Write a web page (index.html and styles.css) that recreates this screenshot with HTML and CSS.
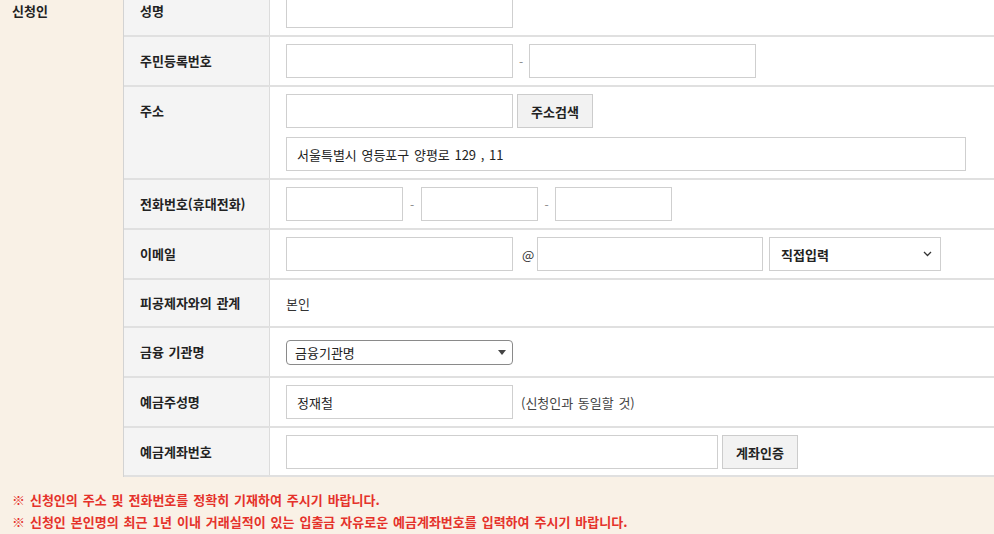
FILE: index.html
```html
<!DOCTYPE html>
<html lang="ko">
<head>
<meta charset="utf-8">
<title>신청인</title>
<link rel="stylesheet" href="styles.css">
</head>
<body>
<div class="page">
  <div class="form">
    <div class="side">신청인</div>
    <div class="rows">
      <div class="row">
        <div class="label">성명</div>
        <div class="field"><div class="line"><input class="inp w227" type="text"></div></div>
      </div>
      <div class="row">
        <div class="label">주민등록번호</div>
        <div class="field"><div class="line"><input class="inp w227" type="text"><span class="sep s16">-</span><input class="inp w227" type="text"></div></div>
      </div>
      <div class="row">
        <div class="label">주소</div>
        <div class="field">
          <div class="line"><input class="inp w227" type="text"><button class="btn b76 ml4" type="button">주소검색</button></div>
          <div class="line"><input class="inp w680" type="text" value="서울특별시 영등포구 양평로 129 , 11"></div>
        </div>
      </div>
      <div class="row">
        <div class="label">전화번호(휴대전화)</div>
        <div class="field"><div class="line"><input class="inp w117" type="text"><span class="sep s18">-</span><input class="inp w117" type="text"><span class="sep s17">-</span><input class="inp w117" type="text"></div></div>
      </div>
      <div class="row">
        <div class="label">이메일</div>
        <div class="field"><div class="line"><input class="inp w227" type="text"><span class="sep at">@</span><input class="inp w226" type="text"><div class="sel ml6"><span>직접입력</span><svg class="chev" width="9" height="6" viewBox="0 0 9 6"><path d="M1 1 L4.5 4.5 L8 1" fill="none" stroke="#333" stroke-width="1.3"/></svg></div></div></div>
      </div>
      <div class="row short">
        <div class="label">피공제자와의 관계</div>
        <div class="field"><div class="line text">본인</div></div>
      </div>
      <div class="row">
        <div class="label">금융 기관명</div>
        <div class="field"><div class="line"><div class="bank"><span>금융기관명</span><svg width="8" height="5" viewBox="0 0 8 5"><path d="M0 0 H8 L4 5 Z" fill="#444"/></svg></div></div></div>
      </div>
      <div class="row">
        <div class="label">예금주성명</div>
        <div class="field"><div class="line"><input class="inp w227" type="text" value="정재철"><span class="hint">(신청인과 동일할 것)</span></div></div>
      </div>
      <div class="row last">
        <div class="label">예금계좌번호</div>
        <div class="field"><div class="line"><input class="inp w432" type="text"><button class="btn b76 ml4" type="button">계좌인증</button></div></div>
      </div>
    </div>
  </div>
  <div class="notice">
    <p>※ 신청인의 주소 및 전화번호를 정확히 기재하여 주시기 바랍니다.</p>
    <p>※ 신청인 본인명의 최근 1년 이내 거래실적이 있는 입출금 자유로운 예금계좌번호를 입력하여 주시기 바랍니다.</p>
  </div>
</div>
</body>
</html>
```
FILE: styles.css
```css
* { box-sizing: border-box; }
body {
  margin: 0;
  background: #fff;
  font-family: "Noto Sans CJK KR", "Noto Sans", sans-serif;
  font-size: 13px;
  word-spacing: 1px;
  color: #333;
}
.page { margin-top: -13px; }
.form {
  display: grid;
  grid-template-columns: 124px 1fr;
}
.side {
  background: #f9f1e6;
  border-right: 1px solid #d3d3d3;
  padding: 7px 12px;
  line-height: 34px;
  font-weight: 700;
  color: #222;
}
.row {
  display: grid;
  grid-template-columns: 146px 1fr;
  border-bottom: 2px solid #e0e0e0;
}
.label {
  background: #f4f4f4;
  border-right: 1px solid #dcdcdc;
  padding: 7px 16px;
  line-height: 34px;
  font-weight: 700;
  color: #222;
}
.row.short .label { padding: 6px 16px; line-height: 34px; }
.field {
  padding: 7px 16px;
  display: flex;
  flex-direction: column;
  gap: 9px;
}
.row.short .field { padding: 6px 16px; }
.row.last .field, .row.last .label { padding-bottom: 6px; }
.line {
  display: flex;
  align-items: center;
  height: 34px;
}
.line.text { color: #333; }
.inp {
  height: 34px;
  border: 1px solid #cfcfcf;
  background: #fff;
  padding: 0 10px;
  font-family: inherit;
  font-size: 13px;
  word-spacing: 1px;
  color: #222;
  margin: 0;
  outline: none;
}
.w117 { width: 117px; }
.w226 { width: 226px; }
.w227 { width: 227px; }
.w432 { width: 432px; }
.w680 { width: 680px; }
.sep {
  color: #888;
  text-align: center;
  font-size: 12px;
}
.s16 { width: 16px; }
.s17 { width: 17px; }
.s18 { width: 18px; }
.sep.at { width: 24px; color: #333; font-size: 13px; text-align: left; padding-left: 9px; }
.btn {
  height: 34px;
  border: 1px solid #cccccc;
  background: #f2f2f2;
  font-family: inherit;
  font-size: 13px;
  font-weight: 700;
  color: #222;
  padding: 0;
  margin: 0;
}
.b76 { width: 76px; }
.ml4 { margin-left: 4px; }
.ml6 { margin-left: 6px; }
.sel {
  width: 172px;
  height: 34px;
  border: 1px solid #cfcfcf;
  background: #fff;
  display: flex;
  align-items: center;
  justify-content: space-between;
  padding: 0 8px 0 11px;
  font-weight: 700;
  color: #222;
}
.bank {
  width: 227px;
  height: 25px;
  border: 1px solid #8a8a8a;
  border-radius: 4px;
  display: flex;
  align-items: center;
  justify-content: space-between;
  padding: 0 6px 0 8px;
  color: #222;
}
.hint {
  margin-left: 8px;
  color: #444;
}
.notice {
  background: #f9f1e6;
  padding: 12px 12px 8px;
  color: #e5322b;
  font-weight: 700;
  line-height: 22px;
  word-spacing: 1.3px;
}
.notice p { margin: 0; }
```
